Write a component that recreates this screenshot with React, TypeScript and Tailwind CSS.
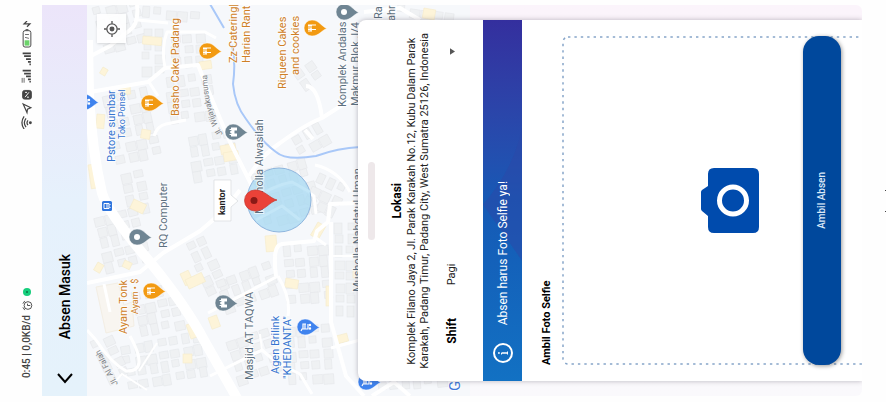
import type { ReactNode } from "react";

const ORANGE = "#f29a12";
const SLATE = "#6f8593";
const BLUE = "#3f83ee";

const sideways = "rotate-180 [writing-mode:vertical-rl] whitespace-nowrap";

type Cluster = { x: number; y: number; cols: number; rows: number; angle: number };

const clusters: Cluster[] = [
  { x: 92, y: 8, cols: 4, rows: 4, angle: -15 },
  { x: 142, y: 28, cols: 2, rows: 4, angle: 0 },
  { x: 170, y: 34, cols: 3, rows: 3, angle: -4 },
  { x: 142, y: 6, cols: 5, rows: 1, angle: 4 },
  { x: 102, y: 96, cols: 4, rows: 6, angle: -12 },
  { x: 120, y: 172, cols: 2, rows: 4, angle: -12 },
  { x: 164, y: 78, cols: 4, rows: 4, angle: -8 },
  { x: 186, y: 136, cols: 4, rows: 4, angle: -10 },
  { x: 92, y: 216, cols: 4, rows: 5, angle: -14 },
  { x: 130, y: 292, cols: 4, rows: 4, angle: -12 },
  { x: 120, y: 345, cols: 7, rows: 4, angle: -10 },
  { x: 90, y: 342, cols: 2, rows: 4, angle: -25 },
  { x: 184, y: 244, cols: 2, rows: 5, angle: -25 },
  { x: 214, y: 280, cols: 5, rows: 3, angle: -20 },
  { x: 282, y: 246, cols: 4, rows: 5, angle: -5 },
  { x: 334, y: 222, cols: 2, rows: 8, angle: 0 },
  { x: 250, y: 172, cols: 5, rows: 5, angle: -16 },
  { x: 318, y: 172, cols: 3, rows: 3, angle: 25 },
  { x: 284, y: 326, cols: 4, rows: 5, angle: -4 },
  { x: 224, y: 340, cols: 4, rows: 4, angle: -18 },
  { x: 290, y: 138, cols: 3, rows: 2, angle: -30 },
  { x: 292, y: 72, cols: 2, rows: 2, angle: -35 },
  { x: 398, y: 4, cols: 5, rows: 1, angle: 8 },
  { x: 376, y: 382, cols: 6, rows: 1, angle: -6 },
];

const yellowBlocks: [number, number, number, number, number][] = [
  [143, 36, 19, 8, 5], [103, 67, 6, 7, 30], [119, 86, 11, 9, -5], [97, 114, 8, 14, 5],
  [142, 129, 9, 9, 10], [88, 165, 6, 24, -8], [134, 199, 14, 10, 25], [125, 260, 8, 7, 25],
  [98, 262, 7, 9, 30], [180, 274, 9, 13, -25], [186, 325, 12, 15, -20], [185, 280, 18, 10, -25],
  [199, 62, 12, 8, -8], [220, 146, 15, 9, -10], [223, 153, 15, 9, -10], [265, 236, 11, 16, -5],
  [286, 278, 13, 9, 10], [318, 222, 9, 15, 30], [326, 286, 6, 20, 0], [336, 336, 11, 8, -15],
  [424, 8, 12, 10, 10], [183, 354, 9, 9, 0], [208, 318, 9, 12, -20], [353, 270, 5, 8, 0],
];

const roads: [string, number][] = [
  ["M88 40L89 95Q92 150 102 193Q108 213 150 262Q186 306 205 342L238 400", 10],
  ["M87 58L110 46L130 30Q139 24 137 4", 4],
  ["M138 20L168 23", 3],
  ["M90 92L148 82L165 68L198 65Q212 100 230 142L256 194", 4],
  ["M165 68Q161 48 167 32H205L216 38", 3],
  ["M149 82L158 96", 3],
  ["M154 136Q157 126 166 124L186 120", 3],
  ["M87 283L140 272L163 253L200 231Q224 212 240 190", 4],
  ["M104 284L110 312M130 336Q150 372 126 371Q110 362 96 340L87 330", 3],
  ["M139 371L157 343M114 383L122 374L147 390", 2],
  ["M249 176Q262 155 280 143Q306 124 322 118L350 100", 4],
  ["M322 118Q318 86 306 86M305 130L313 139", 4],
  ["M315 165Q338 170 350 192", 3],
  ["M244 206Q262 186 296 184L314 196L316 214", 3],
  ["M276 276Q272 245 282 244L314 241L317 231L328 222L330 204L358 203", 4],
  ["M316 238L326 245M278 276L208 313M278 276Q291 298 288 316", 3],
  ["M331 222L331 322L346 376L364 396", 4],
  ["M331 348L360 340M210 376L262 350L276 362L300 374L312 394", 3],
  ["M262 350L260 334M330 256L358 256", 2],
  ["M364 12L400 8L420 20M372 396L394 382L410 396", 4],
];

type Mark = "fork" | "dot" | "mosque" | "cart";

function Glyph({ mark }: { mark: Mark }) {
  if (mark === "dot") return <circle r="3" fill="#fff" />;
  if (mark === "mosque")
    return <path d="M4 4.500H-2V3H-3.500V2H-1Q-5 0-1-2H-3.500V-3H-2V-4.500H4V-1.500H1.500V1.500H4Z" fill="#fff" />;
  if (mark === "cart")
    return (
      <g fill="none" stroke="#fff" strokeWidth="1.2">
        <path d="M-4 4L-3 2H3V-3M-2 2L-2-3L1-3M0 2V-3" />
        <circle cx="5" cy="-2" r=".6" />
        <circle cx="5" cy="1.500" r=".6" />
      </g>
    );
  return (
    <path
      d="M-4 3H0M-4 1.500H0M-4 0H0M-1 3V0M0 1.500H4M-4-3H4M-4-2H0"
      stroke="#fff"
      strokeWidth="1.200"
      fill="none"
    />
  );
}

function Pin({ x, y, color, mark }: { x: number; y: number; color: string; mark: Mark }) {
  return (
    <g transform={`translate(${x} ${y})`}>
      <path d="M15 .5C10-1 7-8 0-8A8 8 0 1 0 0 8C7 8 10 2 15 .5Z" fill={color} stroke="#fff" strokeWidth=".5" />
      <Glyph mark={mark} />
    </g>
  );
}

function Label({ x, y, size = 11, fill, children }: { x: number; y: number; size?: number; fill: string; children: ReactNode }) {
  return (
    <text
      transform={`translate(${x} ${y}) rotate(-90)`}
      fontSize={size}
      fill={fill}
      stroke="#fff"
      strokeWidth="2"
      strokeOpacity=".7"
      paintOrder="stroke"
    >
      {children}
    </text>
  );
}

function CityMap() {
  const brown = "#cf8026";
  const grey = "#5c7080";
  const blue = "#3574d0";
  return (
    <svg
      viewBox="87 5 383 391"
      preserveAspectRatio="xMinYMin slice"
      className="absolute inset-y-0 left-0 h-full w-[383px]"
      role="img"
      aria-label="Peta lokasi"
    >
      <rect x="87" y="5" width="383" height="391" fill="#f6f8fb" />
      {clusters.map((c, k) => (
        <g key={k} transform={`translate(${c.x} ${c.y}) rotate(${c.angle})`} fill="#eff1f3" stroke="#e5e7ea" strokeWidth=".6">
          {Array.from({ length: c.cols * c.rows }, (_, i) => {
            const n = (i * 7 + k * 5) % 11;
            return (
              <rect
                key={i}
                x={(i % c.cols) * 12 + (n % 3)}
                y={Math.floor(i / c.cols) * 12 + (n % 4)}
                width={7 + (n % 4)}
                height={7 + (n % 5)}
              />
            );
          })}
        </g>
      ))}
      {yellowBlocks.map(([x, y, w, h, a], i) => (
        <rect key={i} x={x} y={y} width={w} height={h} transform={`rotate(${a} ${x} ${y})`} fill="#fdf4d9" stroke="#f5ebcb" strokeWidth=".6" />
      ))}
      <path d="M96 287L118 283L124 305L132 302L134 326L106 333Z" fill="#f8f5f0" stroke="#f3eee4" />
      {roads.map(([d, w], i) => (
        <path key={i} d={d} fill="none" stroke="#fff" strokeWidth={w} strokeLinejoin="round" />
      ))}
      <path
        d="M210 4L224 28M232 45Q236 62 233 84Q235 105 246 119Q262 142 276 152Q286 161 316 156Q338 148 360 147"
        fill="none"
        stroke="#a9c8f8"
        strokeWidth="2"
      />
      <circle cx="279" cy="200" r="32" fill="#a5d8f1" fillOpacity=".75" stroke="#8fb5dd" />
      <path d="M249 208Q264 187 292 182L310 192M256 220L282 206L300 220" fill="none" stroke="#c3e6f7" strokeWidth="3" />

      <Label x={115} y={162} fill={blue}>Pstore sumbar</Label>
      <Label x={125} y={139} size={9} fill={blue}>Toko Ponsel</Label>
      <Label x={179} y={116} fill={brown}>Basho Cake Padang</Label>
      <Label x={167} y={248} fill={grey}>RQ Computer</Label>
      <Label x={127} y={334} fill={brown}>Ayam Tonk</Label>
      <Label x={138} y={314} size={9} fill={brown}>Ayam • $</Label>
      <Label x={237} y={63} fill={brown}>Zz-Catering|</Label>
      <Label x={250} y={63} fill={brown}>Harian Rant</Label>
      <Label x={286} y={89} fill={brown}>Riqueen Cakes</Label>
      <Label x={299} y={75} fill={brown}>and cookies</Label>
      <Label x={346} y={107} fill={grey}>Komplek Andalas</Label>
      <Label x={359} y={106} fill={grey}>Makmur Blok .I/4</Label>
      <Label x={263} y={214} fill={grey}>Musholla Alwasilah</Label>
      <Label x={361} y={292} fill={grey}>Musholla Nahdatul Uman</Label>
      <Label x={253} y={380} fill={grey}>Masjid AT TAQWA</Label>
      <Label x={279} y={374} fill={blue}>Agen Brilink</Label>
      <Label x={291} y={379} fill={blue}>"KHEDANTA"</Label>
      <Label x={382} y={19} fill={grey}>Ra</Label>
      <Label x={395} y={21} fill={grey}>ahr</Label>
      <Label x={460} y={391} size={15} fill="#3f78d8">G</Label>
      <path id="wijaya" d="M223 134Q208 112 207 72" fill="none" />
      <text fontSize="8" fill="#7c7f84">
        <textPath href="#wijaya">Jl. Wijayakusuma</textPath>
      </text>
      <text fontSize="8" fill="#7c7f84" transform="translate(118 384) rotate(-118)">Jl. Al Falah</text>

      <Pin x={149} y={103} color={ORANGE} mark="fork" />
      <Pin x={207} y={51} color={ORANGE} mark="fork" />
      <Pin x={312} y={28} color={ORANGE} mark="fork" />
      <Pin x={151} y={291} color={ORANGE} mark="fork" />
      <Pin x={137} y={237} color={SLATE} mark="dot" />
      <Pin x={344} y={12} color={SLATE} mark="dot" />
      <Pin x={233} y={132} color={SLATE} mark="mosque" />
      <Pin x={223} y={303} color={SLATE} mark="mosque" />
      <Pin x={305} y={327} color={BLUE} mark="cart" />
      <Pin x={366} y={382} color={BLUE} mark="cart" />
      <Pin x={84} y={102} color={BLUE} mark="cart" />
      <g transform="translate(107 206)">
        <rect x="-5" y="-5" width="10" height="10" rx="1.500" fill="#2f75dd" />
        <path d="M-3-2.500H2V2.500H-3ZM0-2.500V2.500M3-2V-1M3 1V2" fill="none" stroke="#fff" strokeWidth="1" />
      </g>

      <path d="M214 180H231V195L238 201L231 207V221H214Z" fill="#fff" stroke="#d9dbde" strokeWidth=".7" />
      <text transform="translate(225 215) rotate(-90)" fontSize="9" fontWeight="700" fill="#222">kantor</text>
      <path d="M277 200C269 202 265 211 255 211A10.500 10.500 0 0 1 255 190C265 190 269 198 277 200Z" fill="#ea4238" stroke="#c5352d" strokeWidth=".7" />
      <circle cx="254" cy="200.500" r="3.500" fill="#8a1a16" />
    </svg>
  );
}

function StatusBar() {
  return (
    <div className="flex w-[30px] flex-col items-center justify-between pt-4 pb-[18px] text-[#444]">
      <svg viewBox="0 0 12 112" className="h-[108px] w-3" fill="none" stroke="currentColor" aria-hidden="true">
        <path d="M6 0L3 3H9L6 6" strokeWidth="1.300" />
        <rect x="2" y="10" width="8" height="17" rx="2" />
        <path d="M4.500 9H7.500" />
        <rect x="3.500" y="20" width="5" height="5.500" fill="#6bd36a" stroke="none" />
        <path d="M4 14H8M4 17L8 18" strokeWidth=".8" />
        <path d="M10 33.500H1.500M10 36.500H3M10 39.500H5M10 42.500H7M10 45H8.500" strokeWidth="1.800" />
        <path d="M10 51.500H1.500M10 54.500H3M10 57.500H5M10 60.500H7M10 63H8.500" strokeWidth="1.800" />
        <path d="M1 59V64M3 59V64" strokeWidth=".8" />
        <rect x="1.500" y="72" width="9" height="9" rx="2" fill="currentColor" />
        <path d="M4 79L8 74M4 74H6M6 79H8" stroke="#fff" />
        <path d="M2 86L10 90L6.500 91.500L6 95Z" strokeWidth="1.200" />
        <path d="M3 99Q-1.500 105.500 3 112M5 101Q1.500 105.500 5 110M7 103Q5 105.500 7 108" strokeWidth="1.300" />
        <circle cx="9.500" cy="105.500" r="1.500" fill="currentColor" stroke="none" />
      </svg>
      <div className="flex flex-col items-center gap-1">
        <span className="flex size-2 items-center justify-center rounded-full bg-[#16ce7c]">
          <span className="size-[2px] rounded-full bg-[#0b6f45]" />
        </span>
        <svg viewBox="0 0 12 12" className="size-[11px]" fill="none" stroke="currentColor" aria-hidden="true">
          <circle cx="6.500" cy="6" r="4.200" />
          <path d="M1 4L3 1M1 8L3 11M6 4V6H9" />
        </svg>
        <span className={`${sideways} text-[10px] leading-3 font-medium`}>0:45 | 0,0KB/d</span>
      </div>
    </div>
  );
}

function Banner() {
  return (
    <div className="relative flex w-[39px] flex-col-reverse items-center gap-[18px] bg-linear-to-t from-[#1271c3] via-[#1559b5] to-[#342f9e] pb-[18px] text-white">
      <svg viewBox="0 0 39 360" preserveAspectRatio="none" className="absolute inset-0 size-full" aria-hidden="true">
        <path d="M39 108Q30 150 0 184L39 240Z" fill="#2b47a8" fillOpacity=".5" />
      </svg>
      <svg viewBox="0 0 20 20" className="relative size-5" fill="none" stroke="currentColor" strokeWidth="2" aria-hidden="true">
        <circle cx="10" cy="10" r="9" />
        <path d="M8.500 10H15M5 10H6.800" strokeWidth="1.500" />
        <path d="M14.500 8.500V11.500M8.500 10V11.500" strokeWidth="1" />
      </svg>
      <p className={`${sideways} relative text-xs leading-4`}>Absen harus Foto Selfie ya!</p>
    </div>
  );
}

function Sheet() {
  return (
    <section className="relative my-[15px] ml-[271px] flex flex-1 rounded-l-lg bg-white text-[#222] shadow-[0_0_5px_rgba(60,50,70,0.35)]">
      <div className="ml-[10px] h-[78px] w-[7px] self-center rounded-full bg-[#eee8ea]" />
      <div className="ml-[14px] flex items-center">
        <h2 className={`${sideways} text-xs leading-4 font-bold text-black`}>Lokasi</h2>
        <p className={`${sideways} text-center text-[11px] leading-[13px]`}>
          Komplek Filano Jaya 2, Jl. Parak Karakah No.12, Kubu Dalam Parak
          <br />
          Karakah, Padang Timur, Padang City, West Sumatra 25126, Indonesia
        </p>
      </div>
      <div className="relative ml-[13px] flex w-4 flex-col-reverse items-center pt-5 pb-[37px]">
        <label htmlFor="shift" className={`${sideways} text-xs leading-4 font-bold text-black`}>Shift</label>
        <select
          id="shift"
          defaultValue="Pagi"
          className="mb-[33px] w-4 flex-1 rotate-180 appearance-none bg-transparent p-0 text-[11px] leading-4 [writing-mode:vertical-rl]"
        >
          <option>Pagi</option>
          <option>Siang</option>
        </select>
        <svg viewBox="0 0 6 8" className="pointer-events-none absolute top-7 h-[7px] w-[5px]" aria-hidden="true">
          <path d="M0 0L6 4L0 8Z" fill="#555" />
        </svg>
      </div>
      <div className="ml-[23px] flex">
        <Banner />
      </div>
      <h3 className={`${sideways} ml-[17px] pt-4 text-[11px] leading-4 font-bold text-black`}>Ambil Foto Selfie</h3>
      <div className="relative my-4 ml-[7px] flex flex-1 items-center justify-between pr-[21px]">
        <svg className="absolute inset-0 size-full" aria-hidden="true">
          <rect x="1" y="1" width="110%" height="327" rx="5" fill="none" stroke="#86a5c9" strokeWidth="1.500" strokeDasharray="2.400 4" />
        </svg>
        <button type="button" aria-label="Ambil foto" className="relative ml-[139px]">
          <svg viewBox="0 0 58 65" className="h-[65px] w-[58px]" aria-hidden="true">
            <path
              d="M13 0H52Q58 0 58 6V59Q58 65 52 65H13Q7 65 7 59V48L1 43Q0 42 0 41V24Q0 23 1 22L7 18V6Q7 0 13 0Z"
              fill="#004bad"
            />
            <circle cx="32" cy="32.500" r="13.500" fill="none" stroke="#fff" strokeWidth="5" />
          </svg>
        </button>
        <button
          type="button"
          className="relative flex w-[38px] items-center justify-center self-stretch rounded-2xl bg-[#00489c] text-[10px] font-medium text-[#dce8f8] shadow-[1px_1px_4px_rgba(0,0,0,0.4)]"
        >
          <span className={`${sideways} leading-4`}>Ambil Absen</span>
        </button>
      </div>
    </section>
  );
}

export default function App() {
  return (
    <main className="flex min-h-screen bg-[#fefefe] pt-[5px] pb-[6px] pl-3 font-['Roboto','Noto_Sans',sans-serif]">
      <StatusBar />
      <header className="flex w-[45px] flex-col-reverse items-center gap-[31px] bg-linear-to-t from-[#e5f2fb] via-[#e6f1fc] to-[#ece5fa] pb-[10px]">
        <button type="button" aria-label="Kembali" className="text-black">
          <svg viewBox="0 0 16 16" className="size-4" fill="none" stroke="currentColor" strokeWidth="2" aria-hidden="true">
            <path d="M1 4L8 12L15 4" />
          </svg>
        </button>
        <h1 className={`${sideways} text-sm leading-5 font-medium text-black`}>Absen Masuk</h1>
      </header>
      <div className="relative flex flex-1 overflow-hidden rounded-r-md bg-linear-to-b from-[#fbf4fb] to-[#faf9fc]">
        <CityMap />
        <button
          type="button"
          aria-label="Lokasi saya"
          className="absolute top-[9px] left-[10px] flex size-[29px] items-center justify-center bg-white/90 text-[#555] shadow-sm"
        >
          <svg viewBox="0 0 18 18" className="size-4" fill="none" stroke="currentColor" strokeWidth="1.500" aria-hidden="true">
            <circle cx="9" cy="9" r="5.800" />
            <circle cx="9" cy="9" r="2.800" fill="currentColor" stroke="none" />
            <path d="M9 0V3M9 15V18M0 9H3M15 9H18" />
          </svg>
        </button>
        <Sheet />
      </div>
      <div className="flex w-6 flex-col items-end justify-center gap-5" aria-hidden="true">
        <span className="h-px w-px bg-[#444]" />
        <span className="h-px w-px bg-[#444]" />
      </div>
    </main>
  );
}
